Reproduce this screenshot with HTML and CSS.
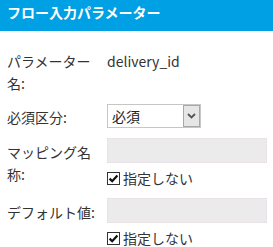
FILE: index.html
```html
<!DOCTYPE html>
<html lang="ja">
<head>
<meta charset="utf-8">
<link rel="stylesheet" href="styles.css">
</head>
<body>
<div class="panel">
  <div class="title">フロー入力パラメーター</div>
  <div class="form">
    <div class="row">
      <div class="label">パラメーター名:</div>
      <div class="value"><span class="text">delivery_id</span></div>
    </div>
    <div class="row">
      <div class="label label-sel">必須区分:</div>
      <div class="value">
        <div class="select-wrap">
          <select class="select"><option>必須</option><option>任意</option></select>
          <span class="arrow"><svg width="9" height="6" viewBox="0 0 9 6"><path d="M1 1 L4.5 4.5 L8 1" fill="none" stroke="#555" stroke-width="1.8"/></svg></span>
        </div>
      </div>
    </div>
    <div class="row">
      <div class="label">マッピング名称:</div>
      <div class="value">
        <input class="input" type="text" disabled>
        <label class="check"><span class="box"><svg width="11" height="11" viewBox="0 0 11 11"><path d="M1.6 5.6 L4.2 8.2 L9.4 2.4" fill="none" stroke="#111" stroke-width="2.2"/></svg></span>指定しない</label>
      </div>
    </div>
    <div class="row">
      <div class="label">デフォルト値:</div>
      <div class="value">
        <input class="input" type="text" disabled>
        <label class="check"><span class="box"><svg width="11" height="11" viewBox="0 0 11 11"><path d="M1.6 5.6 L4.2 8.2 L9.4 2.4" fill="none" stroke="#111" stroke-width="2.2"/></svg></span>指定しない</label>
      </div>
    </div>
  </div>
</div>
</body>
</html>
```
FILE: styles.css
```css
html, body {
  margin: 0;
  padding: 0;
  background: #fff;
}
body {
  font-family: "Noto Sans CJK JP", "Noto Sans", sans-serif;
  font-size: 14px;
  color: #333;
}
.panel {
  width: 273px;
}
.title {
  height: 31px;
  box-sizing: border-box;
  background: #00a0e4;
  color: #fff;
  font-weight: bold;
  font-size: 14px;
  line-height: 20px;
  padding: 2px 7px 0;
}
.form {
  display: flex;
  flex-direction: column;
  gap: 10px;
  padding: 16px 6px 0 7px;
}
.row {
  display: grid;
  grid-template-columns: 93px 160px;
  column-gap: 7px;
}
.label {
  line-height: 22px;
  padding-top: 3px;
}
.label-sel {
  padding-top: 2px;
}
.value {
  display: flex;
  flex-direction: column;
  align-items: flex-start;
}
.text {
  line-height: 22px;
  padding-top: 3px;
}
.select-wrap {
  position: relative;
  width: 94px;
  height: 24px;
}
.select {
  appearance: none;
  -webkit-appearance: none;
  width: 94px;
  height: 24px;
  box-sizing: border-box;
  border: 1px solid #c6c6c6;
  border-radius: 0;
  background: #fff;
  font: inherit;
  color: #222;
  padding: 0 0 0 4px;
  margin: 0;
  outline: none;
}
.arrow {
  position: absolute;
  top: 1px;
  right: 1px;
  width: 17px;
  height: 22px;
  box-sizing: border-box;
  border: 1px solid #a8a8a8;
  background: #e6e6e6;
  display: flex;
  align-items: center;
  justify-content: center;
  pointer-events: none;
}
.input {
  width: 160px;
  height: 25px;
  box-sizing: border-box;
  margin: 0;
  border: 1px dotted #e2dbe2;
  background: #ebebeb;
  font: inherit;
}
.check {
  display: flex;
  align-items: center;
  gap: 3px;
  margin-top: 5px;
  height: 20px;
  line-height: 20px;
}
.box {
  width: 13px;
  height: 13px;
  box-sizing: border-box;
  border: 1px solid #333;
  background: #fff;
  display: flex;
  align-items: center;
  justify-content: center;
}
```
